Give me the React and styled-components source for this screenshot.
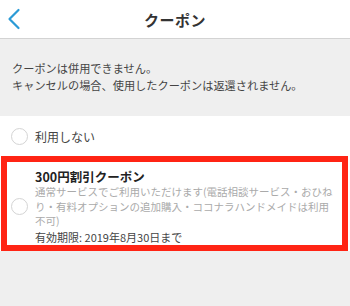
import React from "react";
import styled, { createGlobalStyle } from "styled-components";

const Global = createGlobalStyle`
  html, body {
    margin: 0;
    padding: 0;
    background: #efefef;
    font-family: "Noto Sans CJK JP", "Noto Sans", sans-serif;
    color: #333;
  }
`;

const Page = styled.div`
  width: 350px;
  height: 306px;
  background: #efefef;
  overflow: hidden;
`;

const Header = styled.header`
  height: 38px;
  background: #fff;
  border-bottom: 1px solid #d3d3d3;
  display: grid;
  grid-template-columns: 40px 1fr 40px;
  align-items: center;
`;

const Back = styled.button`
  border: 0;
  background: none;
  padding: 0 0 0 6px;
  height: 38px;
  display: flex;
  align-items: center;
`;

const Title = styled.h1`
  margin: 0;
  text-align: center;
  font-size: 15px;
  font-weight: 700;
  color: #333;
  letter-spacing: 0.5px;
`;

const Notice = styled.p`
  margin: 0;
  padding: 21px 12px 22px;
  font-size: 11.2px;
  line-height: 17px;
  color: #444;
`;

const List = styled.div`
  background: #fff;
`;

const Option = styled.label`
  display: flex;
  align-items: center;
  gap: 7px;
  padding: ${(p) => (p.$highlight ? "6px 4px 0 4px" : "0 11px")};
  height: ${(p) => (p.$highlight ? "auto" : "40px")};
  border: ${(p) => (p.$highlight ? "6px solid #ff2414" : "none")};
  margin: ${(p) => (p.$highlight ? "0 2px 0 1px" : "0")};
  box-sizing: border-box;
`;

const Radio = styled.span`
  flex: none;
  width: 17px;
  height: 17px;
  border-radius: 50%;
  border: 1px solid #d4d4d4;
  box-sizing: border-box;
  background: #fff;
`;

const Label = styled.span`
  font-size: 12px;
  color: #444;
`;

const Body = styled.div`
  width: 298px;
`;

const CouponName = styled.div`
  font-size: 12.5px;
  font-weight: 700;
  line-height: 17px;
  color: #222;
`;

const Desc = styled.div`
  font-size: 10.5px;
  line-height: 14.5px;
  color: #aaa;
`;

const Expiry = styled.div`
  font-size: 11px;
  line-height: 16px;
  color: #444;
`;

export default function App() {
  return (
    <Page>
      <Global />
      <Header>
        <Back aria-label="戻る">
          <svg width="16" height="22" viewBox="0 0 16 22">
            <path
              d="M12.5 2 L3.5 11 L12.5 20"
              fill="none"
              stroke="#2b9bd6"
              strokeWidth="2.2"
              strokeLinecap="round"
              strokeLinejoin="round"
            />
          </svg>
        </Back>
        <Title>クーポン</Title>
        <span />
      </Header>
      <Notice>
        クーポンは併用できません。
        <br />
        キャンセルの場合、使用したクーポンは返還されません。
      </Notice>
      <List>
        <Option>
          <Radio />
          <Label>利用しない</Label>
        </Option>
        <Option $highlight>
          <Radio />
          <Body>
            <CouponName>300円割引クーポン</CouponName>
            <Desc>
              通常サービスでご利用いただけます(電話相談サービス・おひねり・有料オプションの追加購入・ココナラハンドメイドは利用不可)
            </Desc>
            <Expiry>有効期限: 2019年8月30日まで</Expiry>
          </Body>
        </Option>
      </List>
    </Page>
  );
}
